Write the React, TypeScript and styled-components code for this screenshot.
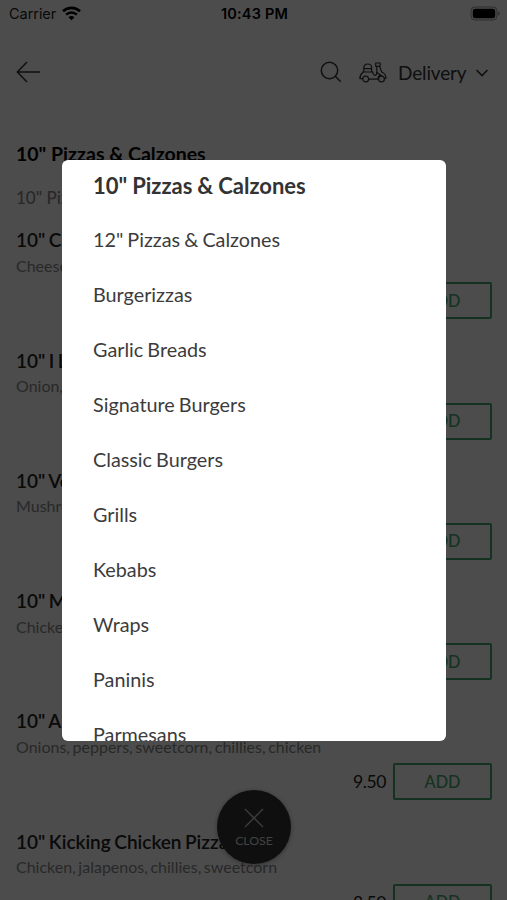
import React from "react";
import styled, { createGlobalStyle } from "styled-components";

const GlobalStyle = createGlobalStyle`
  * { box-sizing: border-box; }
  html, body { margin: 0; padding: 0; background: #fff; }
  body { font-family: Lato, sans-serif; overflow: hidden; }
`;

const Screen = styled.div`
  position: relative;
  width: 507px;
  height: 900px;
  overflow: hidden;
  background: #fff;
`;

const StatusBar = styled.div`
  display: grid;
  grid-template-columns: 1fr auto 1fr;
  align-items: center;
  height: 28px;
  padding: 0 7px 0 9px;
  font-family: Inter, sans-serif;
  font-size: 14.5px;
  line-height: 28px;
  color: #000;
`;

const Carrier = styled.div`
  display: flex;
  align-items: center;
  gap: 6px;
  letter-spacing: -0.05px;
  color: #222;
  svg { display: block; margin-bottom: 2px; }
`;

const Clock = styled.div`
  font-weight: 600;
  font-size: 14.5px;
  letter-spacing: 0.2px;
`;

const Battery = styled.div`
  display: flex;
  justify-content: flex-end;
  svg { display: block; margin-bottom: 2px; }
`;

const Header = styled.header`
  display: flex;
  align-items: center;
  height: 88px;
  padding: 0 18px 0 16px;
  color: #333;
  svg { display: block; flex: none; }
`;

const Spacer = styled.div`
  flex: 1;
`;

const Mode = styled.div`
  display: flex;
  align-items: center;
  margin-left: 17px;
  font-size: 19px;
  letter-spacing: -0.15px;
  line-height: 24px;
`;

const ModeLabel = styled.span`
  width: 69px;
  margin: 1px 8px 0 11px;
  white-space: nowrap;
`;

const Menu = styled.main`
  padding: 24px 15px 0 16px;
`;

const Heading = styled.h1`
  margin: 0;
  font-size: 19.5px;
  line-height: 28px;
  font-weight: 700;
  color: #000;
`;

const Category = styled.div`
  margin-top: 16px;
  height: 42.3px;
  font-size: 17px;
  line-height: 28px;
  font-weight: 500;
  color: #888;
`;

const Dish = styled.section`
  height: 120.3px;
  white-space: nowrap;
`;

const DishName = styled.h2`
  margin: 0;
  font-size: 19px;
  line-height: 27.5px;
  font-weight: 600;
  word-spacing: -1.2px;
  color: #222;
`;

const DishInfo = styled.p`
  margin: 0;
  font-size: 16px;
  line-height: 24.5px;
  word-spacing: -1.5px;
  color: #888;
`;

const Order = styled.div`
  display: flex;
  justify-content: flex-end;
  align-items: center;
  gap: 7px;
  margin-top: 4px;
  font-size: 17.5px;
  letter-spacing: -0.4px;
  color: #222;
`;

const AddButton = styled.button`
  width: 99px;
  height: 37px;
  padding: 0;
  border: 2px solid #48a870;
  border-radius: 2px;
  background: transparent;
  font: 500 16.3px/32px Lato, sans-serif;
  letter-spacing: 0;
  color: #48a870;
`;

const CloseButton = styled.div`
  position: absolute;
  left: 217px;
  top: 790px;
  width: 74px;
  height: 74px;
  display: flex;
  flex-direction: column;
  align-items: center;
  padding-top: 18px;
  gap: 4px;
  border-radius: 50%;
  background: #333;
  box-shadow: 0 1px 5px rgba(0, 0, 0, 0.35);
  font-size: 12.3px;
  line-height: 17px;
  color: #ddd;
  svg { display: block; }
`;

const Overlay = styled.div`
  position: absolute;
  inset: 0;
  padding: 159.5px 61px 0 62px;
  background: rgba(0, 0, 0, 0.7);
`;

const Dialog = styled.div`
  height: 581.7px;
  overflow: hidden;
  border-radius: 6px;
  background: #fff;
  padding-left: 31px;
`;

const Option = styled.div<{ $active?: boolean }>`
  height: ${(p) => (p.$active ? "52.5px" : "55px")};
  line-height: ${(p) => (p.$active ? "52.5px" : "55px")};
  font-size: ${(p) => (p.$active ? "22px" : "19.8px")};
  font-weight: ${(p) => (p.$active ? 700 : 400)};
  color: ${(p) => (p.$active ? "#333" : "#3c3c3c")};
  word-spacing: ${(p) => (p.$active ? "-0.4px" : "-1px")};
  white-space: nowrap;
`;

const categories = [
  '10" Pizzas & Calzones',
  '12" Pizzas & Calzones',
  "Burgerizzas",
  "Garlic Breads",
  "Signature Burgers",
  "Classic Burgers",
  "Grills",
  "Kebabs",
  "Wraps",
  "Paninis",
  "Parmesans",
];

const dishes = [
  { name: '10" Cheese', info: "Cheese", price: "" },
  { name: '10" I L', info: "Onion,", price: "" },
  { name: '10" Veg', info: "Mushroom", price: "" },
  { name: '10" M', info: "Chicken", price: "" },
  { name: '10" A', info: "Onions, peppers, sweetcorn, chillies, chicken", price: "9.50" },
  { name: '10" Kicking Chicken Pizza', info: "Chicken, jalapenos, chillies, sweetcorn", price: "8.50" },
];

const WifiIcon = () => (
  <svg width="19" height="15" viewBox="0 0 19 15" fill="none" stroke="#000">
    <path d="M1 5.3C5.7.7 13.3.7 18 5.3" strokeWidth="2.7" />
    <path d="M4.1 8.7c3.1-2.9 7.7-2.9 10.8 0" strokeWidth="2.5" />
    <path d="M9.5 14.2 6.5 11.2c1.7-1.5 4.3-1.5 6 0Z" fill="#000" stroke="none" />
  </svg>
);

const BatteryIcon = () => (
  <svg width="30" height="15" viewBox="0 0 30 15">
    <rect x="1" y="1" width="26" height="13" rx="4" fill="none" stroke="#000" strokeOpacity=".4" />
    <rect x="2.8" y="2.8" width="22.4" height="9.4" rx="2.3" fill="#000" />
    <path d="M28.4 5.3c1.5.7 1.5 3.7 0 4.4Z" fill="#000" fillOpacity=".5" />
  </svg>
);

const BackIcon = () => (
  <svg width="25" height="22" viewBox="0 0 25 22" fill="none" stroke="currentColor" strokeWidth="1.5">
    <path d="M24 11H1.5M11 1 1.3 11 11 21" />
  </svg>
);

const SearchIcon = () => (
  <svg width="22" height="22" viewBox="0 0 22 22" fill="none" stroke="currentColor" strokeWidth="1.5">
    <circle cx="9.5" cy="9.5" r="8.2" />
    <path d="m15.3 15.3 5.4 5.4" />
  </svg>
);

const ScooterIcon = () => (
  <svg width="28" height="21" viewBox="0 0 28 21" fill="none" stroke="currentColor" strokeWidth="1.2" strokeLinejoin="round" strokeLinecap="round">
    <path d="M4.8 10V6C4.8 3.5 6.4 2 8.7 2s3.9 1.5 3.9 4v4M4.8 6.6h7.8M3.8 10h9.8" />
    <path d="M4 10.2C1.9 11.9.8 13.8.8 16.6h2.9M9.7 17.2h9.2c0-2 1.3-3.6 3.3-4M13.4 10c1.1.8.8 3.4 2.3 3.4 1.7 0 2.2-1.6 2.1-3.2V4.3" />
    <path d="M16.7 1h4.4v3.3h-4.4ZM20.7 4.5 22.6 10c2.4.9 4.2 3 4.4 6l-1.3.8M17.8 10.2l3.8 3" />
    <circle cx="6.7" cy="17" r="2.9" />
    <circle cx="22.5" cy="17" r="2.9" />
  </svg>
);

const ChevronIcon = () => (
  <svg width="14" height="10" viewBox="0 0 14 10" fill="none" stroke="currentColor" strokeWidth="1.6">
    <path d="M1.5 3 7 8.5 12.5 3" />
  </svg>
);

const CrossIcon = () => (
  <svg width="20" height="20" viewBox="0 0 20 20" fill="none" stroke="#ccc" strokeWidth="1.3">
    <path d="m1 1 18 18M19 1 1 19" />
  </svg>
);

export default function App() {
  return (
    <>
      <GlobalStyle />
      <Screen>
        <StatusBar>
          <Carrier>
            Carrier
            <WifiIcon />
          </Carrier>
          <Clock>10:43 PM</Clock>
          <Battery>
            <BatteryIcon />
          </Battery>
        </StatusBar>
        <Header>
          <BackIcon />
          <Spacer />
          <SearchIcon />
          <Mode>
            <ScooterIcon />
            <ModeLabel>Delivery</ModeLabel>
            <ChevronIcon />
          </Mode>
        </Header>
        <Menu>
          <Heading>{categories[0]}</Heading>
          <Category>{categories[0]}</Category>
          {dishes.map((dish) => (
            <Dish key={dish.name}>
              <DishName>{dish.name}</DishName>
              <DishInfo>{dish.info}</DishInfo>
              <Order>
                {dish.price && <span>{dish.price}</span>}
                <AddButton>ADD</AddButton>
              </Order>
            </Dish>
          ))}
        </Menu>
        <CloseButton>
          <CrossIcon />
          CLOSE
        </CloseButton>
        <Overlay>
          <Dialog>
            {categories.map((category, index) => (
              <Option key={category} $active={index === 0}>
                {category}
              </Option>
            ))}
          </Dialog>
        </Overlay>
      </Screen>
    </>
  );
}
